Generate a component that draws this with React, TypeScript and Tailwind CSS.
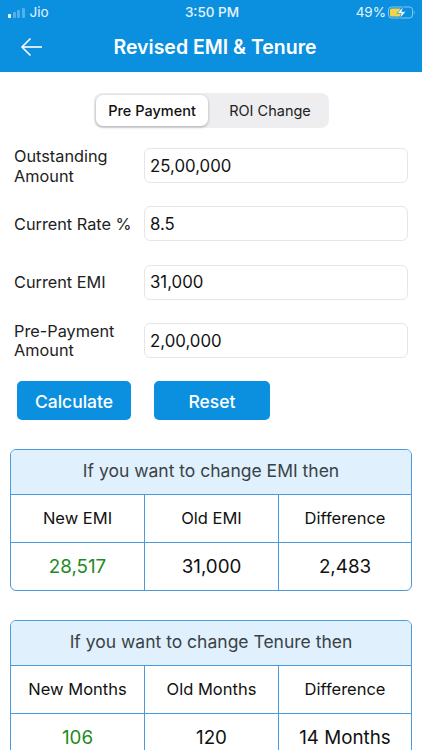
import React from 'react';

const fields = [
  { label: 'Outstanding Amount', value: '25,00,000' },
  { label: 'Current Rate %', value: '8.5' },
  { label: 'Current EMI', value: '31,000' },
  { label: 'Pre-Payment Amount', value: '2,00,000' },
];

function StatusBar() {
  return (
    <div className="h-[25px] flex items-center justify-between pl-[8px] pr-[6px] text-[13.5px] text-white/90">
      <div className="flex items-center gap-[5px] w-[120px]">
        <div className="flex items-end gap-[1.5px] h-[10px]">
          <span className="w-[3px] h-[4px] bg-white rounded-[1px]"></span>
          <span className="w-[3px] h-[6px] bg-white/30 rounded-[1px]"></span>
          <span className="w-[3px] h-[8px] bg-white/30 rounded-[1px]"></span>
          <span className="w-[3px] h-[10px] bg-white/30 rounded-[1px]"></span>
        </div>
        <span>Jio</span>
      </div>
      <span className="font-medium">3:50 PM</span>
      <div className="flex items-center justify-end gap-[2px] w-[120px]">
        <span>49%</span>
        <svg width="28" height="13" viewBox="0 0 28 13">
          <rect x="0.5" y="1" width="24" height="11" rx="3" fill="none" stroke="#ffffff" strokeOpacity="0.5" />
          <rect x="2" y="2.5" width="11" height="8" rx="1.5" fill="#f5d547" />
          <path d="M25.8 4.5c1 .4 1 3.6 0 4z" fill="#ffffff" fillOpacity="0.5" />
          <path d="M15.5 0.5 9 7.4h4.2L11.6 12.5 18 5.6h-4.2z" fill="#ffffff" stroke="#0b8fdf" strokeWidth="0.7" />
        </svg>
      </div>
    </div>
  );
}

function ResultTable({ title, cols, vals, className }: { title: string; cols: string[]; vals: string[]; className?: string }) {
  return (
    <div className={`border border-[#4a9ade] rounded-[6px] overflow-hidden ${className || ''}`}>
      <div className="h-[45px] bg-[#e0f0fc] flex items-center justify-center pb-[2px] text-[17.5px] text-[#3a4248] border-b border-[#4a9ade]">
        {title}
      </div>
      <div className="grid grid-cols-[134px_134px_1fr] h-[48px] border-b border-[#4a9ade] text-[16.5px] text-[#111]">
        {cols.map((c, i) => (
          <div key={c + i} className={`flex items-center justify-center ${i < 2 ? 'border-r border-[#4a9ade]' : ''}`}>
            {c}
          </div>
        ))}
      </div>
      <div className="grid grid-cols-[134px_134px_1fr] h-[47px] text-[18.8px] text-[#111]">
        {vals.map((v, i) => (
          <div
            key={v + i}
            className={`flex items-center justify-center pt-[2px] ${i < 2 ? 'border-r border-[#4a9ade]' : ''} ${i === 0 ? 'text-[#1f8a1f]' : ''}`}
          >
            {v}
          </div>
        ))}
      </div>
    </div>
  );
}

export default function App() {
  return (
    <div className="w-[422px] h-[750px] overflow-hidden bg-white font-['Inter',sans-serif]">
      {/* Header */}
      <div className="h-[72px] bg-[#0b8fdf] text-white">
        <StatusBar />
        <div className="relative h-[45px] flex items-center justify-center">
          <svg className="absolute left-[20px] top-[12px]" width="23" height="20" viewBox="0 0 23 20" fill="none" stroke="#ffffff" strokeWidth="1.6">
            <path d="M22 10H2" />
            <path d="M10.5 1.5 2 10l8.5 8.5" />
          </svg>
          <span className="text-[19.5px] font-semibold pl-[8px]">Revised EMI &amp; Tenure</span>
        </div>
      </div>

      {/* Segment */}
      <div className="flex justify-center pt-[21px] pl-[1px]">
        <div className="w-[235px] h-[35px] bg-[#eeeef0] rounded-[8px] p-[2px] flex text-[14.5px] text-[#111]">
          <div className="w-[112px] bg-white rounded-[7px] shadow-[0_1px_3px_rgba(0,0,0,0.3)] flex items-center justify-center font-medium">
            Pre Payment
          </div>
          <div className="flex-1 flex items-center justify-center text-[#222] pl-[5px]">ROI Change</div>
        </div>
      </div>

      {/* Form */}
      <div className="pt-[20px] pl-[14px] pr-[14px] flex flex-col gap-[23.25px]">
        {fields.map((f) => (
          <div key={f.label} className="flex items-center h-[35px]">
            <div className="w-[130px] text-[16.3px] leading-[19.5px] text-[#222] pt-[2px]">{f.label}</div>
            <div className="flex-1 h-[35px] border-[1.5px] border-[#e6e6e6] rounded-[6px] flex items-center pl-[5px] pt-[2px] text-[16.8px] text-[#111]">
              {f.value}
            </div>
          </div>
        ))}
      </div>

      {/* Buttons */}
      <div className="flex gap-[23px] pl-[17px] pt-[23px]">
        <div className="w-[114px] h-[39px] bg-[#0b8fdf] rounded-[5px] flex items-center justify-center text-white text-[17.5px] font-medium pt-[4px]">
          Calculate
        </div>
        <div className="w-[116px] h-[39px] bg-[#0b8fdf] rounded-[5px] flex items-center justify-center text-white text-[17.5px] font-medium pt-[4px]">
          Reset
        </div>
      </div>

      {/* Results */}
      <div className="px-[10px] pt-[29.25px]">
        <ResultTable
          title="If you want to change EMI then"
          cols={['New EMI', 'Old EMI', 'Difference']}
          vals={['28,517', '31,000', '2,483']}
        />
        <ResultTable
          className="mt-[29px]"
          title="If you want to change Tenure then"
          cols={['New Months', 'Old Months', 'Difference']}
          vals={['106', '120', '14 Months']}
        />
      </div>
    </div>
  );
}
